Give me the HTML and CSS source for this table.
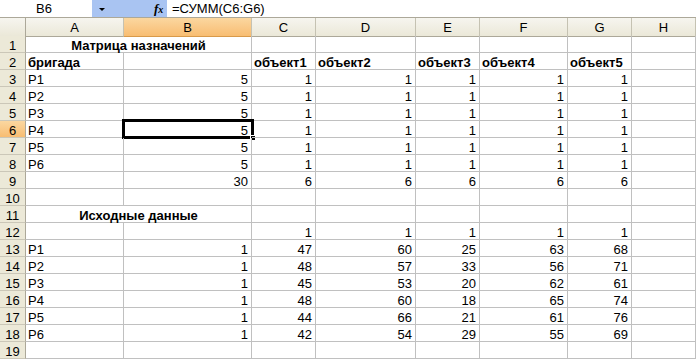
FILE: index.html
```html
<!DOCTYPE html>
<html lang="ru">
<head>
<meta charset="utf-8">
<title>Книга1</title>
<link rel="stylesheet" href="styles.css">
</head>
<body>
<div class="sheet">
  <div class="fbar">
    <div class="namebox">B6</div>
    <div class="fbtn"><span class="arrow"></span><span class="fx">f<span class="fx-x">x</span></span></div>
    <div class="formula">=СУММ(C6:G6)</div>
  </div>

  <div class="row hdr">
    <div class="h corner"></div><div class="h">A</div><div class="h sel">B</div><div class="h">C</div><div class="h">D</div><div class="h">E</div><div class="h">F</div><div class="h">G</div><div class="h">H</div>
  </div>

  <div class="row"><div class="rh">1</div><div class="c title">Матрица назначений</div><div class="c"></div><div class="c"></div><div class="c"></div><div class="c"></div><div class="c"></div><div class="c"></div></div>
  <div class="row"><div class="rh">2</div><div class="c b">бригада</div><div class="c"></div><div class="c b">объект1</div><div class="c b">объект2</div><div class="c b">объект3</div><div class="c b">объект4</div><div class="c b">объект5</div><div class="c"></div></div>
  <div class="row"><div class="rh">3</div><div class="c">P1</div><div class="c n">5</div><div class="c n">1</div><div class="c n">1</div><div class="c n">1</div><div class="c n">1</div><div class="c n">1</div><div class="c"></div></div>
  <div class="row"><div class="rh">4</div><div class="c">P2</div><div class="c n">5</div><div class="c n">1</div><div class="c n">1</div><div class="c n">1</div><div class="c n">1</div><div class="c n">1</div><div class="c"></div></div>
  <div class="row"><div class="rh">5</div><div class="c">P3</div><div class="c n">5</div><div class="c n">1</div><div class="c n">1</div><div class="c n">1</div><div class="c n">1</div><div class="c n">1</div><div class="c"></div></div>
  <div class="row"><div class="rh sel">6</div><div class="c">P4</div><div class="c n active">5<span class="cursor"><span class="handle"></span></span></div><div class="c n">1</div><div class="c n">1</div><div class="c n">1</div><div class="c n">1</div><div class="c n">1</div><div class="c"></div></div>
  <div class="row"><div class="rh">7</div><div class="c">P5</div><div class="c n">5</div><div class="c n">1</div><div class="c n">1</div><div class="c n">1</div><div class="c n">1</div><div class="c n">1</div><div class="c"></div></div>
  <div class="row"><div class="rh">8</div><div class="c">P6</div><div class="c n">5</div><div class="c n">1</div><div class="c n">1</div><div class="c n">1</div><div class="c n">1</div><div class="c n">1</div><div class="c"></div></div>
  <div class="row"><div class="rh">9</div><div class="c"></div><div class="c n">30</div><div class="c n">6</div><div class="c n">6</div><div class="c n">6</div><div class="c n">6</div><div class="c n">6</div><div class="c"></div></div>
  <div class="row"><div class="rh">10</div><div class="c"></div><div class="c"></div><div class="c"></div><div class="c"></div><div class="c"></div><div class="c"></div><div class="c"></div><div class="c"></div></div>
  <div class="row"><div class="rh">11</div><div class="c title">Исходные данные</div><div class="c"></div><div class="c"></div><div class="c"></div><div class="c"></div><div class="c"></div><div class="c"></div></div>
  <div class="row"><div class="rh">12</div><div class="c"></div><div class="c"></div><div class="c n">1</div><div class="c n">1</div><div class="c n">1</div><div class="c n">1</div><div class="c n">1</div><div class="c"></div></div>
  <div class="row"><div class="rh">13</div><div class="c">P1</div><div class="c n">1</div><div class="c n">47</div><div class="c n">60</div><div class="c n">25</div><div class="c n">63</div><div class="c n">68</div><div class="c"></div></div>
  <div class="row"><div class="rh">14</div><div class="c">P2</div><div class="c n">1</div><div class="c n">48</div><div class="c n">57</div><div class="c n">33</div><div class="c n">56</div><div class="c n">71</div><div class="c"></div></div>
  <div class="row"><div class="rh">15</div><div class="c">P3</div><div class="c n">1</div><div class="c n">45</div><div class="c n">53</div><div class="c n">20</div><div class="c n">62</div><div class="c n">61</div><div class="c"></div></div>
  <div class="row"><div class="rh">16</div><div class="c">P4</div><div class="c n">1</div><div class="c n">48</div><div class="c n">60</div><div class="c n">18</div><div class="c n">65</div><div class="c n">74</div><div class="c"></div></div>
  <div class="row"><div class="rh">17</div><div class="c">P5</div><div class="c n">1</div><div class="c n">44</div><div class="c n">66</div><div class="c n">21</div><div class="c n">61</div><div class="c n">76</div><div class="c"></div></div>
  <div class="row"><div class="rh">18</div><div class="c">P6</div><div class="c n">1</div><div class="c n">42</div><div class="c n">54</div><div class="c n">29</div><div class="c n">55</div><div class="c n">69</div><div class="c"></div></div>
  <div class="row"><div class="rh">19</div><div class="c"></div><div class="c"></div><div class="c"></div><div class="c"></div><div class="c"></div><div class="c"></div><div class="c"></div><div class="c"></div></div>
</div>
</body>
</html>
```

FILE: styles.css
```css
* {
  box-sizing: border-box;
}

html, body {
  margin: 0;
  padding: 0;
  background: #ffffff;
}

body {
  font-family: "Liberation Sans", Arial, sans-serif;
  font-size: 13px;
  color: #000;
  overflow: hidden;
}

.sheet {
  width: 696px;
}

/* formula bar */
.fbar {
  display: flex;
  height: 18px;
  border-bottom: 1px solid #aca899;
  background: #fff;
}

.namebox {
  width: 92px;
  text-align: center;
  line-height: 17px;
  padding-right: 4px;
}

.fbtn {
  width: 75px;
  height: 17px;
  background: #a9c4f2;
  display: flex;
  align-items: center;
  padding-left: 7px;
}

.arrow {
  width: 0;
  height: 0;
  border-left: 3px solid transparent;
  border-right: 3px solid transparent;
  border-top: 3px solid #000;
  margin-top: 2px;
}

.fx {
  margin-left: 49px;
  font-family: "Liberation Serif", serif;
  font-style: italic;
  font-weight: bold;
  font-size: 13px;
  line-height: 17px;
}

.fx-x {
  font-size: 10px;
}

.formula {
  padding-left: 5px;
  line-height: 17px;
}

/* grid rows */
.row {
  display: grid;
  grid-template-columns: 26px 98px 128px 64px 100px 64px 88px 64px 64px;
  height: 17px;
}

.row.hdr {
  height: 18px;
}

.h {
  background: linear-gradient(#f6f5ef, #ebe8d8);
  border-right: 1px solid #c5c2b2;
  border-bottom: 1px solid #aca899;
  text-align: center;
  line-height: 17px;
  padding-top: 1px;
}

.h.sel {
  background: linear-gradient(#fbd7a0, #f8bd72);
  border-bottom-color: #d89a4a;
}

.h.corner {
  border-right-color: #aca899;
}

.rh {
  background: #ece9d8;
  border-right: 1px solid #aca899;
  border-bottom: 1px solid #cbc7b8;
  text-align: center;
  line-height: 13px;
  padding-top: 3px;
  font-size: 13px;
}

.rh.sel {
  background: linear-gradient(#fbd7a0, #f8bd72);
}

.c {
  border-right: 1px solid #c0c0c0;
  border-bottom: 1px solid #c0c0c0;
  padding: 3px 2px 0 2px;
  line-height: 13px;
  white-space: nowrap;
  position: relative;
}

.c.n {
  text-align: right;
  padding-right: 3px;
}

.c.b {
  font-weight: bold;
}

.c.title {
  grid-column: span 2;
  font-weight: bold;
  text-align: center;
}

/* active cell frame */
.c.active {
  overflow: visible;
}

.cursor {
  position: absolute;
  left: -2px;
  top: -2px;
  width: 132px;
  height: 20px;
  border: 3px solid #000;
  pointer-events: none;
}

.handle {
  position: absolute;
  right: -4px;
  bottom: -4px;
  width: 5px;
  height: 5px;
  background: #000;
  border: 1px solid #fff;
  border-right: none;
  border-bottom: none;
}
```
